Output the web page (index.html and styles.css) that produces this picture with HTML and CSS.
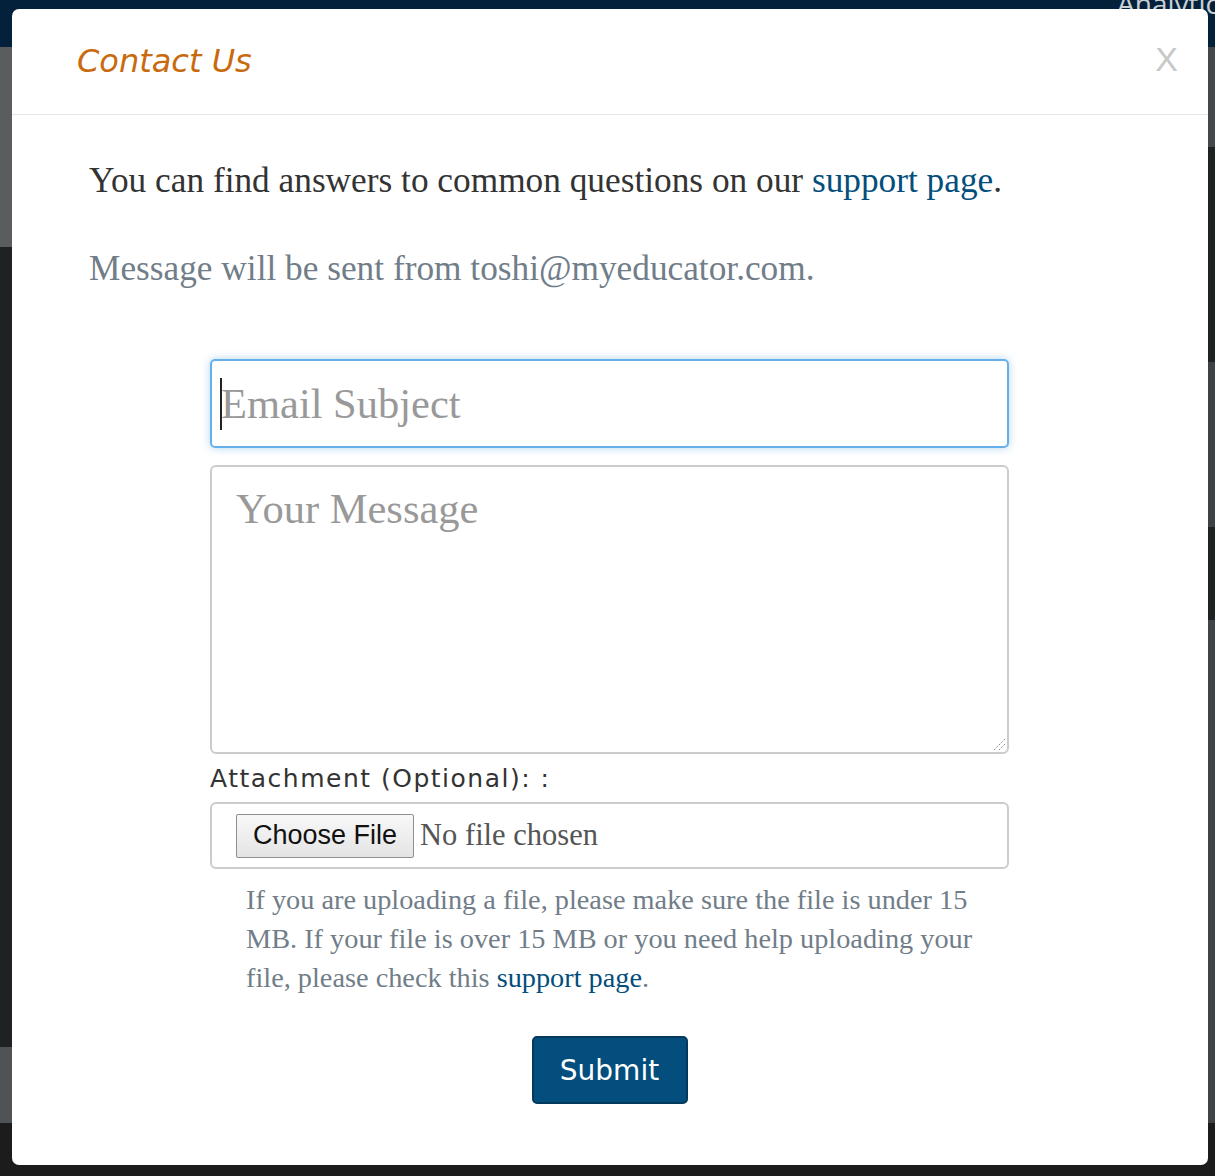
FILE: index.html
```html
<!DOCTYPE html>
<html>
<head>
<meta charset="utf-8">
<link rel="stylesheet" href="styles.css">
</head>
<body>
<div class="backdrop">
  <span class="brand-peek">Analytics</span>
</div>
<div class="modal">
  <div class="modal-header">
    <h4 class="modal-title">Contact Us</h4>
    <span class="close">X</span>
  </div>
  <div class="modal-body">
    <p class="intro">You can find answers to common questions on our <a href="#" class="link">support page</a>.</p>
    <p class="sender">Message will be sent from toshi@myeducator.com.</p>
    <form class="form">
      <div class="subject">
        <span class="caret"></span>
        <span class="placeholder">Email Subject</span>
      </div>
      <div class="message">
        <span class="placeholder">Your Message</span>
        <svg class="grip" width="14" height="14" viewBox="0 0 14 14"><path d="M13 2 L2 13 M13 7 L7 13" stroke="#777" stroke-width="1" stroke-dasharray="1.2 1.2" fill="none"/></svg>
      </div>
      <label class="attach-label">Attachment (Optional): :</label>
      <div class="file-box">
        <span class="file-btn">Choose File</span>
        <span class="file-none">No file chosen</span>
      </div>
      <p class="help">If you are uploading a file, please make sure the file is under 15 MB. If your file is over 15 MB or you need help uploading your file, please check this <a href="#" class="link">support page</a>.</p>
      <div class="actions">
        <span class="submit">Submit</span>
      </div>
    </form>
  </div>
</div>
</body>
</html>
```

FILE: styles.css
```css
html, body {
  margin: 0;
  padding: 0;
}
body {
  width: 1215px;
  height: 1176px;
  overflow: hidden;
  position: relative;
  background:
    linear-gradient(to bottom, #03213a 0, #03213a 47px, transparent 47px),
    linear-gradient(to bottom, transparent 1123px, #1c1c1c 1123px),
    linear-gradient(to right, #5a5d5e 0, #5a5d5e 12px, transparent 12px) 0 47px / 100% 200px no-repeat,
    linear-gradient(to right, #4f5355 0, #4f5355 12px, transparent 12px) 0 1047px / 100% 76px no-repeat,
    linear-gradient(to right, transparent 1208px, #44484a 1208px) 0 47px / 100% 100px no-repeat,
    linear-gradient(to right, transparent 1208px, #3e4244 1208px) 0 362px / 100% 165px no-repeat,
    linear-gradient(to right, transparent 1208px, #404446 1208px) 0 620px / 100% 530px no-repeat,
    #1f2223;
}
.backdrop {
  position: absolute;
  top: 0;
  right: 0;
  height: 47px;
  width: 120px;
  overflow: hidden;
}
.brand-peek {
  position: absolute;
  left: 22px;
  top: -16px;
  font-family: "Open Sans", sans-serif;
  font-size: 28px;
  color: #c9ced3;
}
.modal {
  position: relative;
  margin: 9px 0 0 12px;
  width: 1196px;
  height: 1156px;
  background: #fff;
  border-radius: 7px;
  box-sizing: border-box;
}
.modal-header {
  height: 105px;
  border-bottom: 1px solid #e5e5e5;
  display: flex;
  align-items: center;
  justify-content: space-between;
  padding: 0 30px 0 65px;
}
.modal-title {
  margin: 0;
  font-family: "DejaVu Sans", sans-serif;
  font-style: italic;
  font-weight: normal;
  font-size: 32px;
  color: #c86a0d;
  padding-bottom: 2px;
}
.close {
  font-family: "Liberation Sans", sans-serif;
  font-size: 34px;
  color: #c8c8c8;
  padding-bottom: 4px;
}
.modal-body {
  padding: 46px 0 60px 77px;
}
.intro {
  margin: 0;
  font-family: "Liberation Serif", serif;
  font-size: 35.3px;
  line-height: 40px;
  color: #333;
}
.link {
  color: #034e7c;
  text-decoration: none;
}
.sender {
  margin: 48px 0 0 0;
  font-family: "Liberation Serif", serif;
  font-size: 35.3px;
  line-height: 40px;
  color: #717d88;
}
.form {
  width: 799px;
  margin: 70px 0 0 121px;
  display: flex;
  flex-direction: column;
}
.subject {
  height: 89px;
  box-sizing: border-box;
  border: 2px solid #66afe9;
  border-radius: 5px;
  box-shadow: 0 0 8px rgba(102, 175, 233, 0.5);
  display: flex;
  align-items: center;
  padding-left: 8px;
}
.caret {
  width: 2px;
  height: 52px;
  background: #222;
}
.placeholder {
  font-family: "Liberation Serif", serif;
  font-size: 42.5px;
  color: #999;
}
.subject .placeholder {
  margin-left: -1px;
}
.message {
  position: relative;
  margin-top: 17px;
  height: 289px;
  box-sizing: border-box;
  border: 2px solid #ccc;
  border-radius: 6px;
  padding: 17px 24px;
  line-height: 50px;
}
.grip {
  position: absolute;
  right: 1px;
  bottom: 1px;
}
.attach-label {
  margin-top: 9px;
  font-family: "DejaVu Sans", sans-serif;
  font-size: 25px;
  letter-spacing: 1.5px;
  line-height: 32px;
  color: #333;
}
.file-box {
  margin-top: 7px;
  height: 67px;
  box-sizing: border-box;
  border: 2px solid #ccc;
  border-radius: 6px;
  display: flex;
  align-items: center;
  padding-left: 24px;
}
.file-btn {
  box-sizing: border-box;
  height: 44px;
  padding: 0 16px;
  display: flex;
  align-items: center;
  border: 1px solid #8f8f8f;
  border-radius: 2px;
  background: linear-gradient(#f8f8f8, #e4e4e4);
  font-family: "Liberation Sans", sans-serif;
  font-size: 27px;
  color: #111;
}
.file-none {
  margin-left: 6px;
  font-family: "Liberation Serif", serif;
  font-size: 30.5px;
  color: #555;
}
.help {
  margin: 11px 30px 0 36px;
  font-family: "Liberation Serif", serif;
  font-size: 28.3px;
  line-height: 39px;
  color: #717d88;
}
.actions {
  margin-top: 39px;
  display: flex;
  justify-content: center;
}
.submit {
  box-sizing: border-box;
  width: 156px;
  height: 68px;
  background: #034e7c;
  border: 2px solid #023a5e;
  border-radius: 5px;
  display: flex;
  align-items: center;
  justify-content: center;
  font-family: "DejaVu Sans", sans-serif;
  font-size: 28px;
  color: #fff;
}
```
